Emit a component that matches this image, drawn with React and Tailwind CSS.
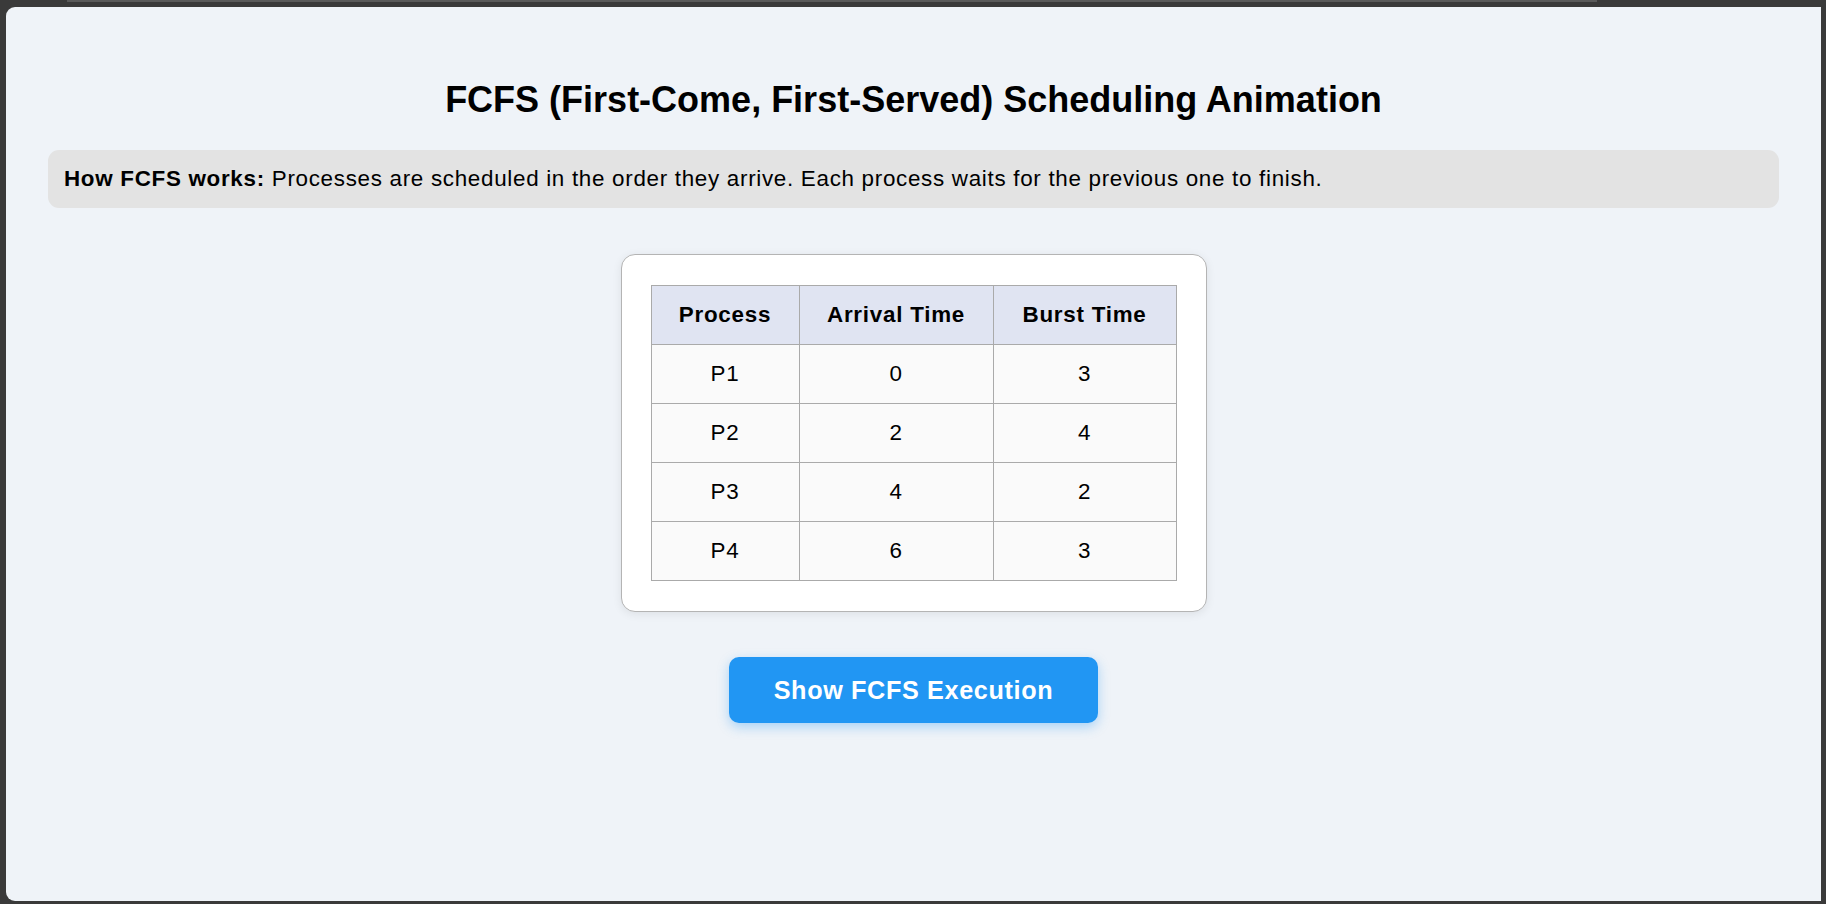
const rows = [
  { name: "P1", arrival: 0, burst: 3 },
  { name: "P2", arrival: 2, burst: 4 },
  { name: "P3", arrival: 4, burst: 2 },
  { name: "P4", arrival: 6, burst: 3 },
];

export default function App() {
  return (
    <div className="w-full h-screen bg-[#3a3a3a] flex flex-col" style={{ fontFamily: '"Liberation Sans", Arial, sans-serif' }}>
      {/* Top frame strip */}
      <div className="h-[7px] shrink-0 flex">
        <div className="ml-[67px] w-[1530px] h-[2px] bg-[#5a5a5a]" />
      </div>
      <div className="flex-1 flex pl-[6px] pr-[5px] pb-[3px] min-h-0">
        <div className="flex-1 bg-[#eff3f8] rounded-tl-[9px] rounded-bl-[9px] flex flex-col items-center px-[42px]">
          <h1 className="mt-[72px] text-[36px] leading-[41px] font-bold text-black">
            FCFS (First-Come, First-Served) Scheduling Animation
          </h1>

          <div className="mt-[30px] w-full bg-[#e3e3e3] rounded-[11px] px-[16px] py-[16px] text-[22.4px] leading-[26px] tracking-[0.7px] text-black">
            <b>How FCFS works:</b> Processes are scheduled in the order they arrive. Each process waits for the previous one to finish.
          </div>

          {/* Process table card */}
          <div className="mt-[46px] bg-white border border-[#b4b4b4] rounded-[14px] px-[29px] py-[30px] shadow-[0_2px_10px_rgba(0,0,0,0.08)]">
            <table className="border-collapse text-[22.4px] tracking-[0.75px] text-black text-center table-fixed w-[525px]">
              <thead>
                <tr className="bg-[#e0e4f2]">
                  <th className="w-[148px] h-[59px] border border-[#aaaaaa] font-bold">Process</th>
                  <th className="w-[194px] h-[59px] border border-[#aaaaaa] font-bold">Arrival Time</th>
                  <th className="w-[183px] h-[59px] border border-[#aaaaaa] font-bold">Burst Time</th>
                </tr>
              </thead>
              <tbody>
                {rows.map((r) => (
                  <tr key={r.name} className="bg-[#fafafa]">
                    <td className="h-[59px] border border-[#aaaaaa]">{r.name}</td>
                    <td className="h-[59px] border border-[#aaaaaa]">{r.arrival}</td>
                    <td className="h-[59px] border border-[#aaaaaa]">{r.burst}</td>
                  </tr>
                ))}
              </tbody>
            </table>
          </div>

          <button className="mt-[45px] bg-[#2196f3] text-white font-bold text-[25.2px] leading-[29px] tracking-[0.65px] px-[45px] py-[18.5px] rounded-[10px] shadow-[0_4px_12px_rgba(33,150,243,0.35)]">
            Show FCFS Execution
          </button>
        </div>
      </div>
    </div>
  );
}
